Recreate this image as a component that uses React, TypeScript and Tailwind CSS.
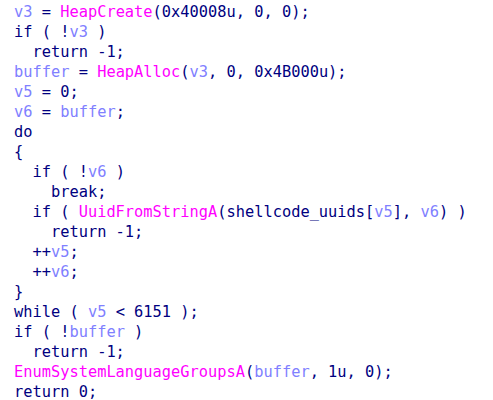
type Tok = [string, 'n' | 'v' | 'f'];

const lines: Tok[][] = [
  [['v3', 'v'], [' = ', 'n'], ['HeapCreate', 'f'], ['(0x40008u, 0, 0);', 'n']],
  [['if ( !', 'n'], ['v3', 'v'], [' )', 'n']],
  [['  return -1;', 'n']],
  [['buffer', 'v'], [' = ', 'n'], ['HeapAlloc', 'f'], ['(', 'n'], ['v3', 'v'], [', 0, 0x4B000u);', 'n']],
  [['v5', 'v'], [' = 0;', 'n']],
  [['v6', 'v'], [' = ', 'n'], ['buffer', 'v'], [';', 'n']],
  [['do', 'n']],
  [['{', 'n']],
  [['  if ( !', 'n'], ['v6', 'v'], [' )', 'n']],
  [['    break;', 'n']],
  [['  if ( ', 'n'], ['UuidFromStringA', 'f'], ['(shellcode_uuids[', 'n'], ['v5', 'v'], ['], ', 'n'], ['v6', 'v'], [') )', 'n']],
  [['    return -1;', 'n']],
  [['  ++', 'n'], ['v5', 'v'], [';', 'n']],
  [['  ++', 'n'], ['v6', 'v'], [';', 'n']],
  [['}', 'n']],
  [['while ( ', 'n'], ['v5', 'v'], [' < 6151 );', 'n']],
  [['if ( !', 'n'], ['buffer', 'v'], [' )', 'n']],
  [['  return -1;', 'n']],
  [['EnumSystemLanguageGroupsA', 'f'], ['(', 'n'], ['buffer', 'v'], [', 1u, 0);', 'n']],
  [['return 0;', 'n']],
];

const colors = {
  n: 'text-[#000080]',
  v: 'text-[#8080ff]',
  f: 'text-[#ff00ff]',
};

export default function App() {
  return (
    <div className="w-[493px] h-[400px] bg-white overflow-hidden pt-[2px] pl-[14px]">
      <pre className="font-['DejaVu_Sans_Mono','Liberation_Mono',monospace] text-[15.35px] leading-[20px] whitespace-pre">
        {lines.map((line, i) => (
          <div key={i}>
            {line.map(([text, kind], j) => (
              <span key={j} className={colors[kind]}>
                {text}
              </span>
            ))}
          </div>
        ))}
      </pre>
    </div>
  );
}
